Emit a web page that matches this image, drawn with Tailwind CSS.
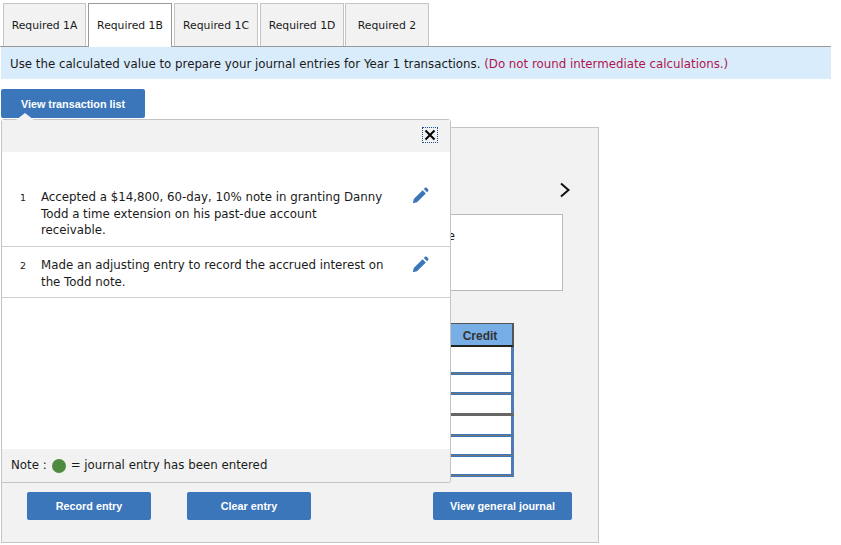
<!DOCTYPE html>
<html lang="en">
<head>
  <meta charset="UTF-8" />
  <meta name="viewport" content="width=device-width, initial-scale=1.0" />
  <title>Journal entries</title>
  <script src="https://cdn.jsdelivr.net/npm/@tailwindcss/browser@4"></script>
</head>
<body class="bg-white text-[#1a1a1a] font-['DejaVu_Sans',sans-serif] text-[11.8px]">
  <div class="relative w-[841px] h-[545px] overflow-hidden">

    <!-- tabs -->
    <div class="flex h-[47px] pt-[3px] pl-[3px] w-[831px] border-b border-[#9a9a9a] text-[10.8px]">
      <div class="w-[83px] h-[43px] pt-[2px] flex items-center justify-center bg-[#f2f2f2] border border-b-0 border-[#c4c4c4]">Required 1A</div>
      <div class="ml-[2px] w-[84px] h-[44px] pt-[1px] flex items-center justify-center bg-white border border-b-0 border-[#9a9a9a]">Required 1B</div>
      <div class="ml-[2px] w-[84px] h-[43px] pt-[2px] flex items-center justify-center bg-[#f2f2f2] border border-b-0 border-[#c4c4c4]">Required 1C</div>
      <div class="ml-[2px] w-[84px] h-[43px] pt-[2px] flex items-center justify-center bg-[#f2f2f2] border border-b-0 border-[#c4c4c4]">Required 1D</div>
      <div class="ml-[1px] w-[84px] h-[43px] pt-[2px] flex items-center justify-center bg-[#f2f2f2] border border-b-0 border-[#c4c4c4]">Required 2</div>
    </div>

    <!-- instruction -->
    <div class="ml-[1px] w-[830px] h-[32px] bg-[#d9ecfb] pl-[9px] pt-[3px] flex items-center">
      <span>Use the calculated value to prepare your journal entries for Year 1 transactions. <span class="text-[#b0144f]">(Do not round intermediate calculations.)</span></span>
    </div>

    <button class="block ml-[1px] mt-[10px] w-[144px] h-[29px] pt-[1px] rounded-[2px] bg-[#3b76ba] text-white text-[10.8px] font-bold font-['Liberation_Sans',sans-serif]">View transaction list</button>

    <!-- journal panel, mostly behind the list -->
    <div class="ml-[1px] mt-[9px] w-[598px] h-[416px] bg-[#f2f2f2] border border-[#c4c4c4] relative">
      <div class="h-[86px] flex justify-end items-start pt-[54px] pr-[27px]">
        <svg width="12" height="16" viewBox="0 0 12 16" fill="none" stroke="#111" stroke-width="2"><path d="M2 1.5 9.5 8 2 14.5"/></svg>
      </div>
      <div class="ml-[36px] w-[525px] h-[77px] bg-white border border-[#b8b8b8] flex justify-end pr-[107px] pt-[13px]">e</div>
      <div class="ml-[36px] mt-[32px] w-[476px] flex justify-end">
        <div class="w-[68px]">
          <div class="h-[24px] pt-[2px] bg-[#77aee6] border-2 border-b-[#222] border-[#555] border-t border-r-2 flex items-center justify-center font-bold text-[12px] text-[#333] font-['Liberation_Sans',sans-serif]">Credit</div>
          <div class="border-r-[3px] border-[#4f7cb4] bg-white h-[25px]"></div>
          <div class="h-[3px] bg-[#777] border-y border-[#3b76ba]"></div>
          <div class="border-r-[3px] border-[#4f7cb4] bg-white h-[17px]"></div>
          <div class="h-[3px] bg-[#777] border-y border-[#3b76ba]"></div>
          <div class="border-r-[3px] border-[#4f7cb4] bg-white h-[18px]"></div>
          <div class="h-[3px] bg-[#666]"></div>
          <div class="border-r-[3px] border-[#4f7cb4] bg-white h-[18px]"></div>
          <div class="h-[3px] bg-[#777] border-y border-[#3b76ba]"></div>
          <div class="border-r-[3px] border-[#4f7cb4] bg-white h-[17px]"></div>
          <div class="h-[3px] bg-[#777] border-y border-[#3b76ba]"></div>
          <div class="border-r-[3px] border-[#4f7cb4] bg-white h-[17px]"></div>
          <div class="h-[3px] bg-[#777] border-y border-[#3b76ba]"></div>
        </div>
      </div>
      <div class="flex mt-[15px] pl-[25px] font-['Liberation_Sans',sans-serif] text-[10.8px] font-bold text-white">
        <button class="w-[124px] h-[28px] rounded-[2px] bg-[#3b76ba]">Record entry</button>
        <button class="ml-[36px] w-[124px] h-[28px] rounded-[2px] bg-[#3b76ba]">Clear entry</button>
        <button class="ml-[122px] w-[139px] h-[28px] rounded-[2px] bg-[#3b76ba]">View general journal</button>
      </div>
    </div>

    <!-- transaction list popover -->
    <div class="absolute left-[1px] top-[119px] w-[450px] h-[364px] flex flex-col bg-white border border-[#c4c4c4] rounded-t-[3px] rounded-br-[2px]">
      <div class="absolute left-[14px] top-[-7px] w-0 h-0 border-x-[9px] border-x-transparent border-b-[7px] border-b-[#f2f2f2]"></div>
      <div class="h-[32px] bg-[#f2f2f2] flex justify-end items-start pt-[7px] pr-[12px] shrink-0">
        <div class="w-[16px] h-[16px] border border-dotted border-[#1f4f8f] flex items-center justify-center">
          <svg width="12" height="12" viewBox="0 0 12 12" fill="none" stroke="#000" stroke-width="2"><path d="M1.5 1.5 10.5 10.5M10.5 1.5 1.5 10.5"/></svg>
        </div>
      </div>
      <div class="h-[95px] pt-[37px] flex border-b border-[#cfcfcf] shrink-0">
        <div class="w-[39px] pl-[18px] pt-[1px] text-[9.5px] leading-[16px]">1</div>
        <div class="w-[343px] leading-[16.5px]">Accepted a $14,800, 60-day, 10% note in granting Danny Todd a time extension on his past-due account receivable.</div>
        <svg class="ml-[28px] mt-[-2px]" width="17" height="17" viewBox="0 0 17 17" fill="#3b76ba"><path d="M.8 16.2 1.8 12 10.6 3.2l3.2 3.2L5 15.2zM11.8 2l1-1c.6-.6 1.4-.6 2 0l1.2 1.2c.6.6.6 1.4 0 2l-1 1z"/></svg>
      </div>
      <div class="h-[51px] pt-[10px] flex border-b border-[#cfcfcf] shrink-0">
        <div class="w-[39px] pl-[18px] pt-[1px] text-[9.5px] leading-[16px]">2</div>
        <div class="w-[343px] leading-[16.5px]">Made an adjusting entry to record the accrued interest on the Todd note.</div>
        <svg class="ml-[28px] mt-[-1px]" width="17" height="17" viewBox="0 0 17 17" fill="#3b76ba"><path d="M.8 16.2 1.8 12 10.6 3.2l3.2 3.2L5 15.2zM11.8 2l1-1c.6-.6 1.4-.6 2 0l1.2 1.2c.6.6.6 1.4 0 2l-1 1z"/></svg>
      </div>
      <div class="flex-1"></div>
      <div class="h-[33px] bg-[#f2f2f2] pt-[1px] flex items-center pl-[9px] shrink-0">
        Note :<span class="inline-block w-[14px] h-[14px] rounded-full bg-[#4e8a3f] mx-[5px]"></span>= journal entry has been entered
      </div>
    </div>
  </div>
</body>
</html>
